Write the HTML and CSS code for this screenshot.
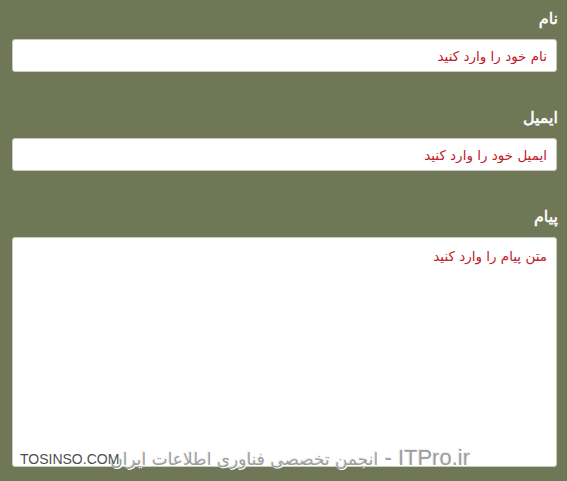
FILE: index.html
```html
<!DOCTYPE html>
<html lang="fa" dir="rtl">
<head>
<meta charset="utf-8">
<link rel="stylesheet" href="styles.css">
</head>
<body>
<form class="form">
  <div class="field">
    <label class="label">نام</label>
    <input class="input" type="text" placeholder="نام خود را وارد کنید">
  </div>
  <div class="field">
    <label class="label">ایمیل</label>
    <input class="input" type="text" placeholder="ایمیل خود را وارد کنید">
  </div>
  <div class="field field-last">
    <label class="label">پیام</label>
    <textarea class="textarea" placeholder="متن پیام را وارد کنید"></textarea>
  </div>
</form>
<div class="watermark">
  <span class="wm-main" dir="rtl"><span class="wm-latin">ITPro.ir - </span><span class="wm-fa">انجمن تخصصی فناوری اطلاعات ایران</span></span>
  <span class="wm-site" dir="ltr">TOSINSO.COM</span>
</div>
</body>
</html>
```
FILE: styles.css
```css
html, body {
  margin: 0;
  padding: 0;
  background: #6f7757;
  height: 100%;
  overflow: hidden;
}
body {
  font-family: "DejaVu Sans", "Noto Sans", sans-serif;
  position: relative;
}
.form {
  padding: 7px 9px 0 10px;
  display: flex;
  flex-direction: column;
}
.field {
  display: flex;
  flex-direction: column;
  margin-bottom: 34px;
}
.field-last {
  margin-bottom: 0;
}
.label {
  color: #ffffff;
  font-family: "DejaVu Sans", sans-serif;
  font-weight: normal;
  font-size: 16px;
  -webkit-text-stroke: 0.5px #ffffff;
  line-height: 24px;
  height: 24px;
  margin-bottom: 8px;
}
.input, .textarea {
  box-sizing: border-box;
  width: 545px;
  margin-left: 3px;
  margin-right: 1px;
  background: #ffffff;
  border: 1px solid #c9cbc0;
  border-radius: 3px;
  font-family: "DejaVu Sans", sans-serif;
  font-size: 13.5px;
  color: #333;
  padding: 0 9px;
  outline: none;
}
.input {
  height: 33px;
}
.textarea {
  height: 230px;
  padding-top: 8px;
  resize: none;
  line-height: 20px;
}
.input::placeholder, .textarea::placeholder {
  color: #c0202a;
  opacity: 1;
}
.watermark {
  position: absolute;
  left: 0;
  top: 444px;
  height: 28px;
  width: 470px;
}
.wm-main {
  position: absolute;
  right: 0;
  top: 0;
  line-height: 28px;
  color: #9d9d9d;
  text-shadow: 1px 1px 0 #ffffff, -1px -1px 0 #ececec;
  white-space: nowrap;
}
.wm-latin {
  font-family: "Liberation Sans", "DejaVu Sans", sans-serif;
  font-size: 22px;
}
.wm-fa {
  font-family: "DejaVu Sans", sans-serif;
  font-size: 17px;
  letter-spacing: 1px;
}
.wm-site {
  position: absolute;
  left: 20px;
  top: 7px;
  font-family: "Liberation Sans", sans-serif;
  font-size: 14px;
  line-height: 16px;
  color: #505050;
  text-shadow: 1px 1px 0 #ffffff;
  white-space: nowrap;
}
```
